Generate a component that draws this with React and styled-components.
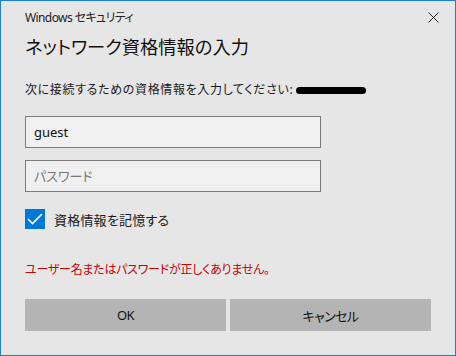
import React from "react";
import styled, { createGlobalStyle } from "styled-components";

const GlobalStyle = createGlobalStyle`
  html, body {
    margin: 0;
    padding: 0;
    background: #e6e6e6;
  }
  * {
    box-sizing: border-box;
  }
`;

const FONT = `"Noto Sans", "Noto Sans CJK JP", sans-serif`;

const Window = styled.div`
  width: 456px;
  height: 356px;
  border: 1px solid #1a7fd6;
  background: #e6e6e6;
  padding: 0 24px;
  display: flex;
  flex-direction: column;
  font-family: ${FONT};
  font-feature-settings: "palt";
  color: #1a1a1a;
`;

const TitleBar = styled.div`
  height: 32px;
  display: flex;
  align-items: center;
  justify-content: space-between;
`;

const Caption = styled.span`
  font-size: 12px;
  letter-spacing: -0.6px;
  color: #222;
`;

const CloseButton = styled.button`
  width: 16px;
  height: 16px;
  margin-right: -10px;
  padding: 0;
  border: none;
  background: none;
  display: flex;
  align-items: center;
  justify-content: center;
`;

const Heading = styled.h1`
  margin: 0;
  font-size: 18.3px;
  line-height: 28px;
  font-weight: 400;
  color: #111;
`;

const Prompt = styled.p`
  margin: 20px 0 0;
  font-size: 12px;
  line-height: 18px;
  letter-spacing: 0.65px;
  display: flex;
  align-items: center;
`;

const Redacted = styled.span`
  display: inline-block;
  width: 70px;
  height: 7px;
  margin-left: 3px;
  border-radius: 4px;
  background: #000;
`;

const Fields = styled.div`
  margin-top: 17px;
  display: flex;
  flex-direction: column;
  gap: 12px;
`;

const Field = styled.input`
  width: 296px;
  height: 32px;
  border: 1px solid #7a7a7a;
  background: #f0f0f0;
  padding: 0 8px;
  font-family: ${FONT};
  font-feature-settings: "palt";
  font-size: 13px;
  color: #111;
  outline: none;

  &::placeholder {
    color: #777;
  }
`;

const CheckRow = styled.label`
  margin-top: 17px;
  display: flex;
  align-items: center;
  gap: 9px;
  font-size: 13px;
  letter-spacing: 0.2px;
`;

const CheckBox = styled.span`
  width: 20px;
  height: 20px;
  background: #0078d7;
  display: flex;
  align-items: center;
  justify-content: center;
`;

const ErrorText = styled.p`
  margin: 32px 0 0;
  font-size: 12px;
  line-height: 18px;
  letter-spacing: -0.25px;
  color: #c80000;
`;

const Buttons = styled.div`
  margin-top: 20px;
  display: grid;
  grid-template-columns: 1fr 1fr;
  gap: 4px;
`;

const Button = styled.button`
  height: 32px;
  border: none;
  background: #b4b4b4;
  font-family: ${FONT};
  font-feature-settings: "palt";
  font-size: 13px;
  letter-spacing: -0.6px;
  color: #111;
`;

export default function App() {
  return (
    <>
      <GlobalStyle />
      <Window>
        <TitleBar>
          <Caption>Windows セキュリティ</Caption>
          <CloseButton aria-label="閉じる">
            <svg width="11" height="11" viewBox="0 0 11 11">
              <path d="M0.5 0.5 L10.5 10.5 M10.5 0.5 L0.5 10.5" stroke="#222" strokeWidth="1" fill="none" />
            </svg>
          </CloseButton>
        </TitleBar>
        <Heading>ネットワーク資格情報の入力</Heading>
        <Prompt>
          次に接続するための資格情報を入力してください:
          <Redacted />
        </Prompt>
        <Fields>
          <Field defaultValue="guest" />
          <Field type="password" placeholder="パスワード" />
        </Fields>
        <CheckRow>
          <CheckBox>
            <svg width="16" height="12" viewBox="0 0 16 12">
              <path d="M1 6 L5.5 10.5 L15 1" stroke="#fff" strokeWidth="1.6" fill="none" />
            </svg>
          </CheckBox>
          資格情報を記憶する
        </CheckRow>
        <ErrorText>ユーザー名またはパスワードが正しくありません。</ErrorText>
        <Buttons>
          <Button>OK</Button>
          <Button>キャンセル</Button>
        </Buttons>
      </Window>
    </>
  );
}
